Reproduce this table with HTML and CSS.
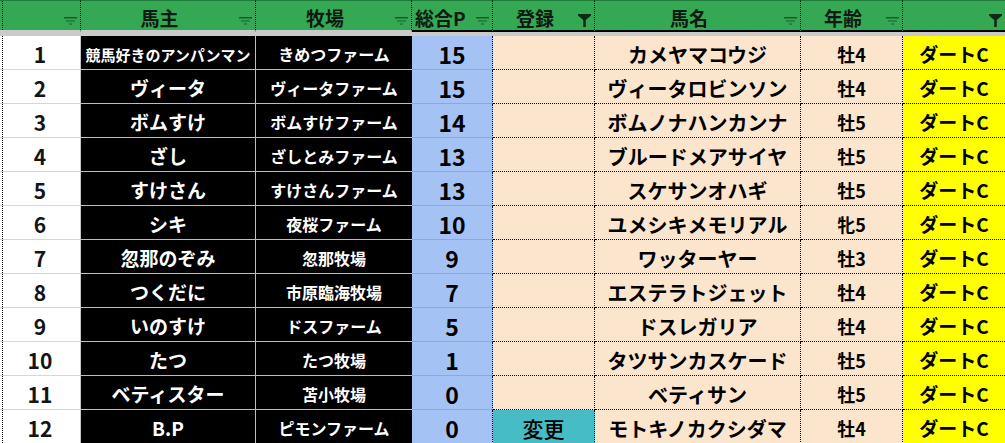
FILE: index.html
```html
<!DOCTYPE html>
<html lang="ja">
<head>
<meta charset="utf-8">
<title>馬主一覧</title>
<link rel="stylesheet" href="styles.css">
</head>
<body>
<div class="sheet">
  <div class="row head">
    <div class="h c0"><span class="lbl"></span><span class="flt"><svg width="13" height="8" viewBox="0 0 13 8"><rect x="0" y="0" width="13" height="1.5"/><rect x="2" y="3.5" width="9" height="1"/><rect x="5" y="6.5" width="3" height="1"/></svg></span></div>
    <div class="h c1"><span class="lbl">馬主</span><span class="flt"><svg width="13" height="8" viewBox="0 0 13 8"><rect x="0" y="0" width="13" height="1.5"/><rect x="2" y="3.5" width="9" height="1"/><rect x="5" y="6.5" width="3" height="1"/></svg></span></div>
    <div class="h c2"><span class="lbl">牧場</span><span class="flt"><svg width="13" height="8" viewBox="0 0 13 8"><rect x="0" y="0" width="13" height="1.5"/><rect x="2" y="3.5" width="9" height="1"/><rect x="5" y="6.5" width="3" height="1"/></svg></span></div>
    <div class="h c3 blk"><span class="lbl">総合P</span><span class="flt"><svg width="13" height="8" viewBox="0 0 13 8"><rect x="0" y="0" width="13" height="1.5"/><rect x="2" y="3.5" width="9" height="1"/><rect x="5" y="6.5" width="3" height="1"/></svg></span></div>
    <div class="h c4 blk"><span class="lbl">登録</span><span class="flt on"><svg width="13" height="13" viewBox="0 0 13 13"><path d="M0 0H13V1.5L7.8 6V13H5.2V6L0 1.5Z"/></svg></span></div>
    <div class="h c5 blk"><span class="lbl">馬名</span><span class="flt"><svg width="13" height="8" viewBox="0 0 13 8"><rect x="0" y="0" width="13" height="1.5"/><rect x="2" y="3.5" width="9" height="1"/><rect x="5" y="6.5" width="3" height="1"/></svg></span></div>
    <div class="h c6 blk"><span class="lbl">年齢</span><span class="flt"><svg width="13" height="8" viewBox="0 0 13 8"><rect x="0" y="0" width="13" height="1.5"/><rect x="2" y="3.5" width="9" height="1"/><rect x="5" y="6.5" width="3" height="1"/></svg></span></div>
    <div class="h c7 blk"><span class="lbl"></span><span class="flt on"><svg width="13" height="13" viewBox="0 0 13 13"><path d="M0 0H13V1.5L7.8 6V13H5.2V6L0 1.5Z"/></svg></span></div>
  </div>
  <div class="band"></div>

  <div class="row"><div class="c c0">1</div><div class="c c1 small">競馬好きのアンパンマン</div><div class="c c2">きめつファーム</div><div class="c c3">15</div><div class="c c4"></div><div class="c c5">カメヤマコウジ</div><div class="c c6">牡4</div><div class="c c7">ダートC</div></div>
  <div class="row"><div class="c c0">2</div><div class="c c1">ヴィータ</div><div class="c c2">ヴィータファーム</div><div class="c c3">15</div><div class="c c4"></div><div class="c c5">ヴィータロビンソン</div><div class="c c6">牡4</div><div class="c c7">ダートC</div></div>
  <div class="row"><div class="c c0">3</div><div class="c c1">ボムすけ</div><div class="c c2">ボムすけファーム</div><div class="c c3">14</div><div class="c c4"></div><div class="c c5">ボムノナハンカンナ</div><div class="c c6">牡5</div><div class="c c7">ダートC</div></div>
  <div class="row"><div class="c c0">4</div><div class="c c1">ざし</div><div class="c c2">ざしとみファーム</div><div class="c c3">13</div><div class="c c4"></div><div class="c c5">ブルードメアサイヤ</div><div class="c c6">牡5</div><div class="c c7">ダートC</div></div>
  <div class="row"><div class="c c0">5</div><div class="c c1">すけさん</div><div class="c c2">すけさんファーム</div><div class="c c3">13</div><div class="c c4"></div><div class="c c5">スケサンオハギ</div><div class="c c6">牡5</div><div class="c c7">ダートC</div></div>
  <div class="row"><div class="c c0">6</div><div class="c c1">シキ</div><div class="c c2">夜桜ファーム</div><div class="c c3">10</div><div class="c c4"></div><div class="c c5">ユメシキメモリアル</div><div class="c c6">牝5</div><div class="c c7">ダートC</div></div>
  <div class="row"><div class="c c0">7</div><div class="c c1">忽那のぞみ</div><div class="c c2">忽那牧場</div><div class="c c3">9</div><div class="c c4"></div><div class="c c5">ワッターヤー</div><div class="c c6">牡3</div><div class="c c7">ダートC</div></div>
  <div class="row"><div class="c c0">8</div><div class="c c1">つくだに</div><div class="c c2">市原臨海牧場</div><div class="c c3">7</div><div class="c c4"></div><div class="c c5">エステラトジェット</div><div class="c c6">牡4</div><div class="c c7">ダートC</div></div>
  <div class="row"><div class="c c0">9</div><div class="c c1">いのすけ</div><div class="c c2">ドスファーム</div><div class="c c3">5</div><div class="c c4"></div><div class="c c5">ドスレガリア</div><div class="c c6">牡4</div><div class="c c7">ダートC</div></div>
  <div class="row"><div class="c c0">10</div><div class="c c1">たつ</div><div class="c c2">たつ牧場</div><div class="c c3">1</div><div class="c c4"></div><div class="c c5">タツサンカスケード</div><div class="c c6">牡5</div><div class="c c7">ダートC</div></div>
  <div class="row"><div class="c c0">11</div><div class="c c1">ベティスター</div><div class="c c2">苫小牧場</div><div class="c c3">0</div><div class="c c4"></div><div class="c c5">ベティサン</div><div class="c c6">牡5</div><div class="c c7">ダートC</div></div>
  <div class="row"><div class="c c0">12</div><div class="c c1">B.P</div><div class="c c2">ピモンファーム</div><div class="c c3">0</div><div class="c c4 chg">変更</div><div class="c c5">モトキノカクシダマ</div><div class="c c6">牡4</div><div class="c c7">ダートC</div></div>
</div>
</body>
</html>
```

FILE: styles.css
```css
html, body {
  margin: 0;
  padding: 0;
  background: #ffffff;
  overflow: hidden;
}

.sheet {
  width: 1005px;
  height: 443px;
  overflow: hidden;
  font-family: "Noto Sans CJK JP", "Noto Sans", sans-serif;
  font-weight: 700;
  color: #000;
}

.row {
  display: grid;
  grid-template-columns: 81px 175px 156px 81px 102px 206px 102px 102px;
  height: 34px;
}

.row.head {
  height: 32px;
}

.band {
  height: 4px;
  background: #cacaca;
}

/* header cells */
.h {
  box-sizing: border-box;
  height: 32px;
  background: #34a853;
  border-top: 1px solid #1f7d3b;
  border-right: 1px dotted #000;
  border-bottom: 2px solid #cacaca;
  display: flex;
  align-items: stretch;
  padding-right: 3px;
}

.h.blk {
  border-bottom-color: #000;
}

.h.c7 {
  border-right: none;
}

.h.c0 {
  background-color: #34a853;
  background-image: repeating-linear-gradient(to bottom, #000 0 1px, transparent 1px 2px);
  background-size: 1px 100%;
  background-position: 2px 0;
  background-repeat: no-repeat;
}

.lbl {
  flex: 1;
  display: flex;
  align-items: center;
  justify-content: center;
  font-size: 19px;
  line-height: 1;
  padding-top: 4px;
  color: #0f1a12;
  white-space: nowrap;
}

.h.c3 .lbl {
  justify-content: flex-start;
  padding-left: 3px;
}

.flt {
  width: 14px;
  display: flex;
  align-items: flex-end;
  justify-content: center;
  padding-bottom: 5px;
  fill: #1b5a2d;
}

.flt.on {
  padding-bottom: 3px;
  fill: #112a18;
}

/* body cells */
.c {
  box-sizing: border-box;
  height: 34px;
  display: flex;
  align-items: center;
  justify-content: center;
  line-height: 1.2;
  padding-top: 4px;
  white-space: nowrap;
}

.c.c0 {
  background-color: #fff;
  background-image: repeating-linear-gradient(to bottom, #000 0 1px, transparent 1px 2px);
  background-size: 1px 100%;
  background-position: 2px 0;
  background-repeat: no-repeat;
  border-right: 1px solid #c6c6c6;
  border-bottom: 1px solid #d6d6d6;
  font-size: 21px;
  color: #141414;
}

.c.c1,
.c.c2 {
  background: #000;
  color: #fff;
  border-bottom: 1px solid #bdbdbd;
}

.c.c1 {
  border-right: 1px solid #bdbdbd;
  font-size: 19px;
}

.c.c1.small {
  font-size: 15px;
}

.c.c2 {
  font-size: 16px;
}

.c.c3 {
  background: #a4c2f4;
  border-bottom: 1px solid #8fa8d6;
  border-right: 1px dotted #000;
  font-size: 23px;
}

.c.c4,
.c.c5,
.c.c6 {
  background: #fce5cd;
  border-right: 1px dotted #000;
  border-bottom: 1px dotted #000;
}

.c.c4 {
  font-size: 21px;
}

.c.c4.chg {
  background: #46bdc6;
  font-weight: 500;
}

.c.c5 {
  font-size: 20px;
}

.c.c6 {
  font-size: 18px;
}

.c.c7 {
  background: #ffff00;
  border-bottom: 1px dotted #000;
  font-size: 19px;
}
```
